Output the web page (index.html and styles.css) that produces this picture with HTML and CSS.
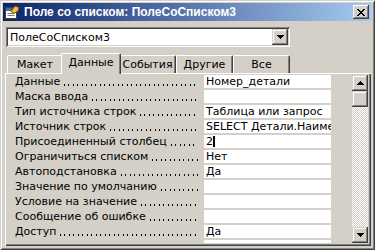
FILE: index.html
```html
<!DOCTYPE html>
<html lang="ru">
<head>
  <meta charset="UTF-8" />
  <meta name="viewport" content="width=device-width, initial-scale=1.0"/>
  <title>Поле со списком: ПолеСоСписком3</title>
  <link rel="stylesheet" href="styles.css">
</head>
<body>

  <div class="window">
    <div class="titlebar">
      <svg class="app-icon" width="16" height="16" viewBox="0 0 16 16">
        <rect x="1.5" y="3.5" width="11" height="11" fill="#fff" stroke="#404040"/>
        <rect x="2" y="4" width="10" height="3" fill="#3a6ea5"/>
        <path d="M3.5 9.5h7M3.5 11.5h7" stroke="#808080"/>
        <path d="M7 7.5l4-5.5 4 1.5-1 3.5-4 2.5z" fill="#f0c040" stroke="#7a5200"/>
      </svg>
      <span class="title">Поле со списком: ПолеСоСписком3</span>
      <div class="close-btn">
        <svg width="8" height="7" viewBox="0 0 8 7"><path d="M0 0h2v1H0zM6 0h2v1H6zM1 1h2v1H1zM5 1h2v1H5zM2 2h4v1H2zM3 3h2v1H3zM2 4h4v1H2zM1 5h2v1H1zM5 5h2v1H5zM0 6h2v1H0zM6 6h2v1H6z"/></svg>
      </div>
    </div>

    <div class="combo">
      <span class="combo-text">ПолеСоСписком3</span>
      <span class="combo-drop">
        <svg width="7" height="4" viewBox="0 0 7 4"><path d="M0 0h7v1H0zM1 1h5v1H1zM2 2h3v1H2zM3 3h1v1H3z"/></svg>
      </span>
    </div>

    <div class="tabs">
      <div class="tab">Макет</div>
      <div class="tab active">Данные</div>
      <div class="tab">События</div>
      <div class="tab">Другие</div>
      <div class="tab">Все</div>
    </div>

    <div class="panel">
      <div class="props">
        <div class="prop"><div class="prop-name"><span>Данные</span><i class="leader"></i></div><div class="prop-value">Номер_детали</div></div>
        <div class="prop"><div class="prop-name"><span>Маска ввода</span><i class="leader"></i></div><div class="prop-value"></div></div>
        <div class="prop"><div class="prop-name"><span>Тип источника строк</span><i class="leader"></i></div><div class="prop-value">Таблица или запрос</div></div>
        <div class="prop"><div class="prop-name"><span>Источник строк</span><i class="leader"></i></div><div class="prop-value">SELECT Детали.Наименование</div></div>
        <div class="prop"><div class="prop-name"><span>Присоединенный столбец</span><i class="leader"></i></div><div class="prop-value">2<span class="caret"></span></div></div>
        <div class="prop"><div class="prop-name"><span>Ограничиться списком</span><i class="leader"></i></div><div class="prop-value">Нет</div></div>
        <div class="prop"><div class="prop-name"><span>Автоподстановка</span><i class="leader"></i></div><div class="prop-value">Да</div></div>
        <div class="prop"><div class="prop-name"><span>Значение по умолчанию</span><i class="leader"></i></div><div class="prop-value"></div></div>
        <div class="prop"><div class="prop-name"><span>Условие на значение</span><i class="leader"></i></div><div class="prop-value"></div></div>
        <div class="prop"><div class="prop-name"><span>Сообщение об ошибке</span><i class="leader"></i></div><div class="prop-value"></div></div>
        <div class="prop"><div class="prop-name"><span>Доступ</span><i class="leader"></i></div><div class="prop-value">Да</div></div>
        <div class="prop"><div class="prop-name"></div><div class="prop-value"></div></div>
      </div>

      <div class="scrollbar">
        <div class="sb-btn">
          <svg width="7" height="4" viewBox="0 0 7 4"><path d="M3 0h1v1H3zM2 1h3v1H2zM1 2h5v1H1zM0 3h7v1H0z"/></svg>
        </div>
        <div class="sb-thumb"></div>
        <div class="sb-track"></div>
        <div class="sb-btn">
          <svg width="7" height="4" viewBox="0 0 7 4"><path d="M0 0h7v1H0zM1 1h5v1H1zM2 2h3v1H2zM3 3h1v1H3z"/></svg>
        </div>
      </div>
    </div>
  </div>

</body>
</html>
```

FILE: styles.css
```css
body {
  margin: 0;
  font-family: "DejaVu Sans", Verdana, sans-serif;
  font-size: 11px;
  color: #000;
}

.window {
  width: 375px;
  height: 250px;
  box-sizing: border-box;
  padding: 3px;
  background: #d4d0c8;
  box-shadow: inset 1px 1px #d4d0c8, inset -1px -1px #404040,
              inset 2px 2px #fff, inset -2px -2px #808080;
  display: flex;
  flex-direction: column;
}

/* title bar */
.titlebar {
  height: 18px;
  flex-shrink: 0;
  display: flex;
  align-items: center;
  padding: 0 3px 0 1px;
  background: linear-gradient(to right, #0a246a, #a6caf0);
  color: #fff;
  font-family: "Liberation Sans", Arial, sans-serif;
  font-weight: bold;
  font-size: 12px;
}

.app-icon {
  margin-right: 4px;
}

.title {
  white-space: nowrap;
}

.close-btn {
  margin-left: auto;
  width: 16px;
  height: 14px;
  display: flex;
  align-items: center;
  justify-content: center;
  background: #d4d0c8;
  box-shadow: inset -1px -1px #404040, inset 1px 1px #fff,
              inset -2px -2px #808080, inset 2px 2px #d4d0c8;
}

/* object combo */
.combo {
  margin: 6px 0 0 3px;
  width: 284px;
  height: 20px;
  flex-shrink: 0;
  box-sizing: border-box;
  padding: 2px;
  display: flex;
  align-items: center;
  background: #fff;
  box-shadow: inset 1px 1px #808080, inset -1px -1px #fff,
              inset 2px 2px #404040, inset -2px -2px #d4d0c8;
}

.combo-text {
  padding-left: 2px;
}

.combo-drop,
.sb-btn {
  width: 16px;
  height: 16px;
  flex-shrink: 0;
  display: flex;
  align-items: center;
  justify-content: center;
  background: #d4d0c8;
  box-shadow: inset -1px -1px #404040, inset 1px 1px #d4d0c8,
              inset -2px -2px #808080, inset 2px 2px #fff;
}

.combo-drop {
  margin-left: auto;
}

/* tabs */
.tabs {
  height: 26px;
  flex-shrink: 0;
  display: flex;
  align-items: flex-end;
  padding-left: 4px;
}

.tab {
  width: 57px;
  height: 18px;
  box-sizing: border-box;
  border-top: 1px solid #fff;
  border-left: 1px solid #fff;
  border-right: 1px solid #404040;
  border-radius: 2px 2px 0 0;
  box-shadow: inset -1px 0 #808080;
  text-align: center;
  line-height: 17px;
  background: #d4d0c8;
}

.tab:first-child {
  width: 56px;
}

.tab.active {
  width: 60px;
  height: 21px;
  margin: 0 -2px -1px;
  position: relative;
  z-index: 1;
}

/* property sheet */
.panel {
  margin-left: 2px;
  width: 366px;
  height: 173px;
  flex-shrink: 0;
  box-sizing: border-box;
  padding: 2px 3px 3px 1px;
  display: flex;
  box-shadow: inset 1px 1px #fff, inset -1px -1px #404040, inset -2px -2px #808080;
}

.props {
  flex: 1;
  overflow: hidden;
}

.prop {
  display: flex;
  height: 13px;
  margin-bottom: 2px;
  line-height: 14px;
}

.prop-name {
  width: 196px;
  box-sizing: border-box;
  padding-left: 9px;
  display: flex;
  white-space: nowrap;
}

.leader {
  flex: 1;
  margin: 0 4px 0 4px;
  background-image: linear-gradient(to right, #000 0 1px, transparent 1px 4px, #000 4px 5px, transparent 5px);
  background-size: 9px 2px;
  background-repeat: repeat-x;
  background-position: 0 9px;
}

.prop-value {
  width: 127px;
  margin-left: 2px;
  box-sizing: border-box;
  padding-left: 2px;
  background: #fff;
  overflow: hidden;
  white-space: nowrap;
}

.caret {
  display: inline-block;
  width: 2px;
  height: 11px;
  background: #000;
  vertical-align: -2px;
}

/* scrollbar */
.scrollbar {
  width: 16px;
  display: flex;
  flex-direction: column;
}

.sb-thumb {
  height: 16px;
  flex-shrink: 0;
  background: #d4d0c8;
  box-shadow: inset -1px -1px #404040, inset 1px 1px #d4d0c8,
              inset -2px -2px #808080, inset 2px 2px #fff;
}

.sb-track {
  flex: 1;
  background: repeating-conic-gradient(#fff 0 25%, #d4d0c8 0 50%) 0 0 / 2px 2px;
}
```
